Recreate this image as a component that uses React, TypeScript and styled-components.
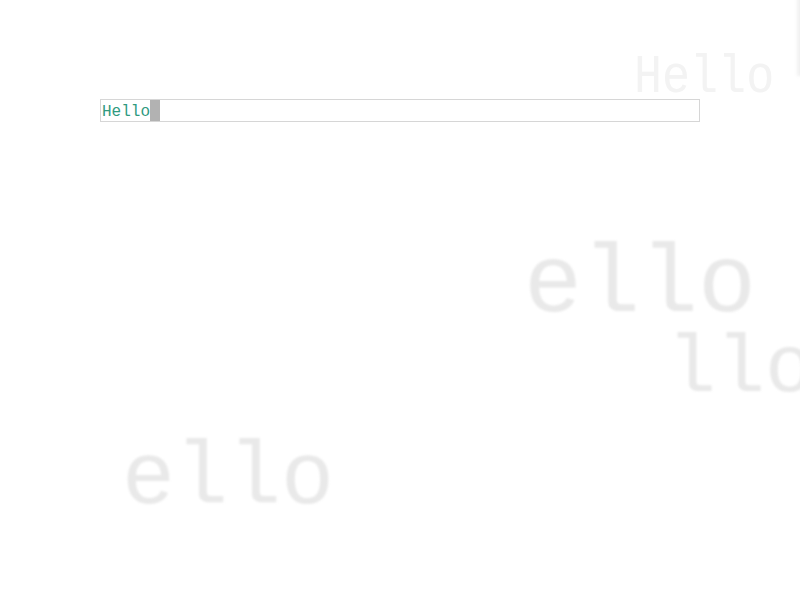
import styled, { createGlobalStyle } from 'styled-components'

const Global = createGlobalStyle`
html, body {
  margin: 0;
  padding: 0;
  background: #ffffff;
  overflow: hidden;
}
`

const Page = styled.main`
position: relative;
width: 800px;
height: 600px;
overflow: hidden;
padding: 99px 100px 0;
box-sizing: border-box;
font-family: "Liberation Mono", "DejaVu Sans Mono", monospace;
`

// echoes of the typed word, drawn small then blown up so they look smeared
const Ghost = styled.span<{ $x: number; $y: number; $sx: number; $sy?: number; $tone: string }>`
position: absolute;
left: ${p => p.$x}px;
top: ${p => p.$y}px;
font-size: 16px;
line-height: 1;
color: ${p => p.$tone};
white-space: pre;
transform-origin: 0 0;
transform: scale(${p => p.$sx}, ${p => p.$sy ?? p.$sx});
filter: blur(0.22px);
user-select: none;
pointer-events: none;
`

const Prompt = styled.div`
position: relative;
z-index: 1;
display: flex;
align-items: stretch;
width: 600px;
height: 23px;
box-sizing: border-box;
border: 1px solid #d6d6d6;
`

const Typed = styled.span`
font-size: 16px;
line-height: 18px;
padding: 3px 0 0 1px;
color: #2f9a7f;
white-space: pre;
`

const Caret = styled.span`
width: 10px;
height: 21px;
background: #b2b2b2;
`

export default function App() {
  return (
    <Page>
      <Global />
      <Ghost $x={634} $y={51} $sx={2.92} $sy={3.4} $tone="#f3f3f3">Hello</Ghost>
      <Ghost $x={787} $y={-20} $sx={8} $tone="#f1f1f1">H</Ghost>
      <Ghost $x={524} $y={239} $sx={6.04} $tone="#e9e9e9">ello</Ghost>
      <Ghost $x={667} $y={330} $sx={5.1} $tone="#e9e9e9">llo</Ghost>
      <Ghost $x={122} $y={437} $sx={5.52} $tone="#e9e9e9">ello</Ghost>
      <Prompt>
        <Typed>Hello</Typed>
        <Caret />
      </Prompt>
    </Page>
  )
}
